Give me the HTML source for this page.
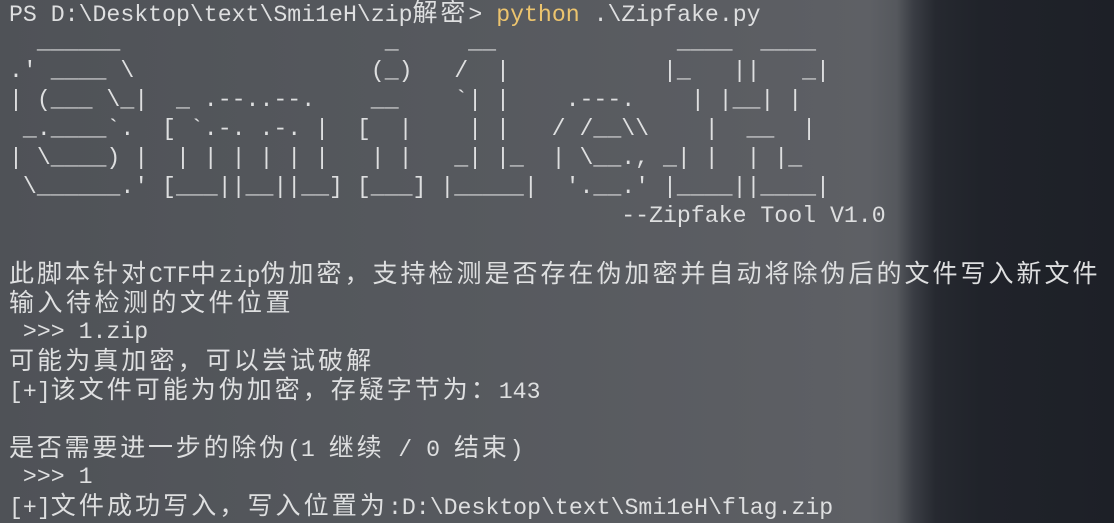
<!DOCTYPE html>
<html><head><meta charset="utf-8"><style>
html,body{margin:0;padding:0}
body{width:1114px;height:519px;overflow:hidden;position:relative;
background:linear-gradient(90deg,#4f5257 0%,#56595e 40%,#5c5e63 70%,#5e6065 78%,#55585d 80.5%,#3a3d44 82%,#262930 84%,#20232a 88%,#1d2027 100%);
font-family:"Liberation Mono",monospace;font-size:23.2px;color:#dedfe0}
.l{position:absolute;left:9px;height:29px;line-height:29px;white-space:pre}
.c{font-family:"Liberation Sans","Noto Sans CJK SC",sans-serif;font-size:25px}
.y{color:#ecc46e}
</style></head><body>
<div class="l" style="top:-1px">PS D:\Desktop\text\Smi1eH\zip<span class="c" style="letter-spacing:2.9px">解密</span>&gt; <span class="y">python</span> .\Zipfake.py</div>
<div class="l" style="top:28px">  ______                   _     __             ____  ____</div>
<div class="l" style="top:57px">.' ____ \                 (_)   /  |           |_   ||   _|</div>
<div class="l" style="top:86px">| (___ \_|  _ .--..--.    __    `| |    .---.    | |__| |</div>
<div class="l" style="top:115px"> _.____`.  [ `.-. .-. |  [  |    | |   / /__\\    |  __  |</div>
<div class="l" style="top:144px">| \____) |  | | | | | |   | |   _| |_  | \__., _| |  | |_</div>
<div class="l" style="top:173px"> \______.' [___||__||__] [___] |_____|  '.__.' |____||____|</div>
<div class="l" style="top:202px">                                            --Zipfake Tool V1.0</div>
<div class="l" style="top:260px"><span class="c" style="letter-spacing:3px">此脚本针对</span>CTF<span class="c" style="letter-spacing:3px">中</span>zip<span class="c" style="letter-spacing:3px">伪加密，支持检测是否存在伪加密并自动将除伪后的文件写入新文件</span></div>
<div class="l" style="top:289px"><span class="c" style="letter-spacing:3.5px">输入待检测的文件位置</span></div>
<div class="l" style="top:318px"> &gt;&gt;&gt; 1.zip</div>
<div class="l" style="top:347px"><span class="c" style="letter-spacing:3.1px">可能为真加密，可以尝试破解</span></div>
<div class="l" style="top:376px">[+]<span class="c" style="letter-spacing:3px">该文件可能为伪加密，存疑字节为：</span>143</div>
<div class="l" style="top:434px"><span class="c" style="letter-spacing:2.8px">是否需要进一步的除伪</span>(1 <span class="c" style="letter-spacing:2.8px">继续</span> / 0 <span class="c" style="letter-spacing:2.8px">结束</span>)</div>
<div class="l" style="top:463px"> &gt;&gt;&gt; 1</div>
<div class="l" style="top:492px">[+]<span class="c" style="letter-spacing:3.1px">文件成功写入，写入位置为</span>:D:\Desktop\text\Smi1eH\flag.zip</div>
</body></html>
